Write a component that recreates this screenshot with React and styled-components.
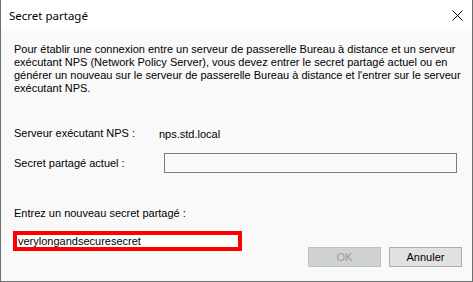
import React, { useState } from 'react';
import styled, { createGlobalStyle } from 'styled-components';

const GlobalStyle = createGlobalStyle`
    html, body {
        margin: 0;
        padding: 0;
        background: #ffffff;
    }
`;

const Dialog = styled.div`
    width: 473px;
    height: 282px;
    box-sizing: border-box;
    display: flex;
    flex-direction: column;
    border: 1px solid #6f6f6f;
    border-top: none;
    background-color: #f9f9f9;
    font-family: "Liberation Sans", Arial, sans-serif;
    font-size: 11px;
    color: #000;
`;

const TitleBar = styled.div`
    height: 31px;
    flex: none;
    display: flex;
    align-items: center;
    justify-content: space-between;
    background: #ffffff;
    padding: 0 9px 0 8px;
`;

const Title = styled.span`
    font-family: "Noto Sans", "Open Sans", sans-serif;
    font-size: 11.5px;
    color: #000;
    margin-top: -1px;
`;

const CloseButton = styled.button`
    width: 12px;
    height: 12px;
    padding: 0;
    border: none;
    background: none;
    display: flex;
    align-items: center;
    justify-content: center;
    margin-top: -1px;
`;

const Body = styled.div`
    flex: 1;
    display: flex;
    flex-direction: column;
    padding: 12px 15px 14px 13px;
`;

const Intro = styled.p`
    margin: 0;
    line-height: 13px;
    white-space: nowrap;
`;

const Row = styled.div`
    display: flex;
    align-items: center;
    margin-top: ${(p) => p.$top}px;
`;

const Label = styled.span`
    width: ${(p) => p.$width}px;
    flex: none;
    line-height: 13px;
`;

const ReadOnlyField = styled.div`
    flex: 1;
    height: 20px;
    box-sizing: border-box;
    border: 1px solid #7a7a7a;
    background: #f9f9f9;
`;

const Footer = styled.div`
    display: flex;
    justify-content: space-between;
    margin-top: 34px;
`;

const NewSecret = styled.div`
    display: flex;
    flex-direction: column;
    margin-left: -1px;
    margin-bottom: 16px;
`;

const NewSecretLabel = styled.span`
    line-height: 13px;
    margin-left: 1px;
`;

const Highlight = styled.div`
    margin-top: 11px;
    width: 229px;
    height: 20px;
    box-sizing: border-box;
    border: 4px solid #ff0000;
    background: #ffffff;
    display: flex;
    align-items: center;
`;

const SecretInput = styled.input`
    border: none;
    outline: none;
    background: transparent;
    width: 100%;
    padding: 0 0 0 1px;
    font-family: "Liberation Sans", Arial, sans-serif;
    font-size: 11px;
    color: #000;
`;

const Buttons = styled.div`
    display: flex;
    align-self: flex-end;
    gap: 8px;
    margin-right: -5px;
`;

const DialogButton = styled.button`
    width: 73px;
    height: 20px;
    box-sizing: border-box;
    padding: 0;
    font-family: "Liberation Sans", Arial, sans-serif;
    font-size: 11px;
    border: 1px solid ${(p) => (p.disabled ? '#bfc2bf' : '#adadad')};
    background: ${(p) => (p.disabled ? '#cfd3cf' : '#e1e1e1')};
    color: ${(p) => (p.disabled ? '#9a9c9a' : '#000')};
`;

const App = () => {
    const [secret, setSecret] = useState('verylongandsecuresecret');

    return (
        <>
            <GlobalStyle />
            <Dialog>
                <TitleBar>
                    <Title>Secret partagé</Title>
                    <CloseButton aria-label="Fermer">
                        <svg width="11" height="11" viewBox="0 0 11 11">
                            <path d="M0.5 0.5 L10.5 10.5 M10.5 0.5 L0.5 10.5" stroke="#000" strokeWidth="1" />
                        </svg>
                    </CloseButton>
                </TitleBar>
                <Body>
                    <Intro>
                        Pour établir une connexion entre un serveur de passerelle Bureau à distance et un serveur<br />
                        exécutant NPS (Network Policy Server), vous devez entrer le secret partagé actuel ou en<br />
                        générer un nouveau sur le serveur de passerelle Bureau à distance et l'entrer sur le serveur<br />
                        exécutant NPS.
                    </Intro>
                    <Row $top={32}>
                        <Label $width={145}>Serveur exécutant NPS :</Label>
                        <span>nps.std.local</span>
                    </Row>
                    <Row $top={13}>
                        <Label $width={150}>Secret partagé actuel :</Label>
                        <ReadOnlyField />
                    </Row>
                    <Footer>
                        <NewSecret>
                            <NewSecretLabel>Entrez un nouveau secret partagé :</NewSecretLabel>
                            <Highlight>
                                <SecretInput value={secret} onChange={(e) => setSecret(e.target.value)} />
                            </Highlight>
                        </NewSecret>
                        <Buttons>
                            <DialogButton disabled>OK</DialogButton>
                            <DialogButton>Annuler</DialogButton>
                        </Buttons>
                    </Footer>
                </Body>
            </Dialog>
        </>
    );
};

export default App;
